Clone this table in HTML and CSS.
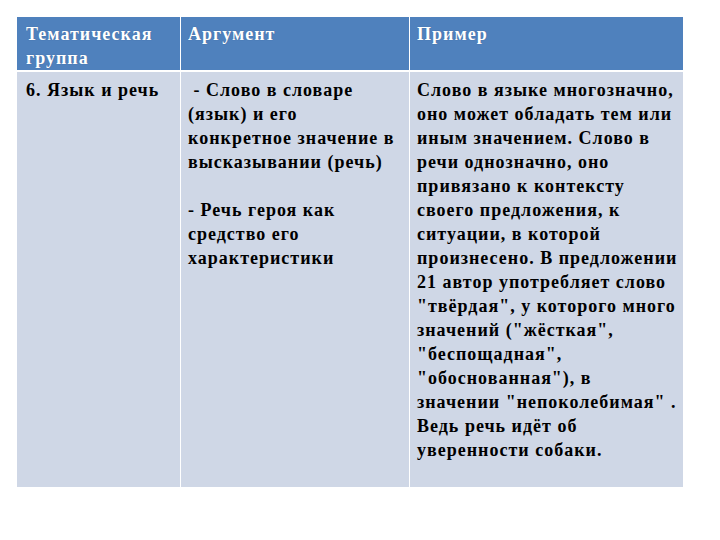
FILE: index.html
```html
<!DOCTYPE html>
<html>
<head>
<meta charset="utf-8">
<title>Таблица</title>
<link rel="stylesheet" href="styles.css">
</head>
<body>
<table class="grid">
  <thead>
    <tr class="head">
      <th class="c1">Тематическая группа</th>
      <th class="c2">Аргумент</th>
      <th class="c3">Пример</th>
    </tr>
  </thead>
  <tbody>
    <tr class="body">
      <td>6. Язык и речь</td>
      <td><p>&nbsp;- Слово в словаре (язык) и его конкретное значение в высказывании (речь)</p><p class="gap">- Речь героя как средство его характеристики</p></td>
      <td>Слово в языке многозначно, оно может обладать тем или иным значением. Слово в речи однозначно, оно привязано к контексту своего предложения, к ситуации, в которой произнесено. В предложении 21 автор употребляет слово "твёрдая", у которого много значений ("жёсткая", "беспощадная", "обоснованная"), в значении "непоколебимая" . Ведь речь идёт об уверенности собаки.</td>
    </tr>
  </tbody>
</table>
</body>
</html>
```

FILE: styles.css
```css
html, body {
  margin: 0;
  padding: 0;
  background: #ffffff;
}
body {
  padding: 17px 0 0 17px;
}
.grid {
  border-collapse: separate;
  border-spacing: 0;
  table-layout: fixed;
  width: 666px;
}
.grid th,
.grid td {
  box-sizing: border-box;
  font-family: "Liberation Serif", "Times New Roman", serif;
  font-weight: bold;
  font-size: 18px;
  letter-spacing: 1px;
  line-height: 24px;
  vertical-align: top;
  text-align: left;
  padding: 5px 5px 0 7px;
  border-left: 1px solid #ffffff;
}
.grid th:first-child,
.grid td:first-child {
  border-left: none;
  padding-left: 9px;
}
.c1 { width: 163px; }
.c2 { width: 229px; }
.c3 { width: 274px; }
.head th {
  background: #4f81bd;
  color: #ffffff;
  height: 55px;
  border-bottom: 2px solid #ffffff;
  text-shadow: 0 0 1px rgba(40, 60, 100, 0.45);
}
.body td {
  background: #cfd7e6;
  color: #000000;
  height: 415px;
  padding-top: 6px;
}
.body p {
  margin: 0;
}
.body p.gap {
  margin-top: 24px;
}
```
